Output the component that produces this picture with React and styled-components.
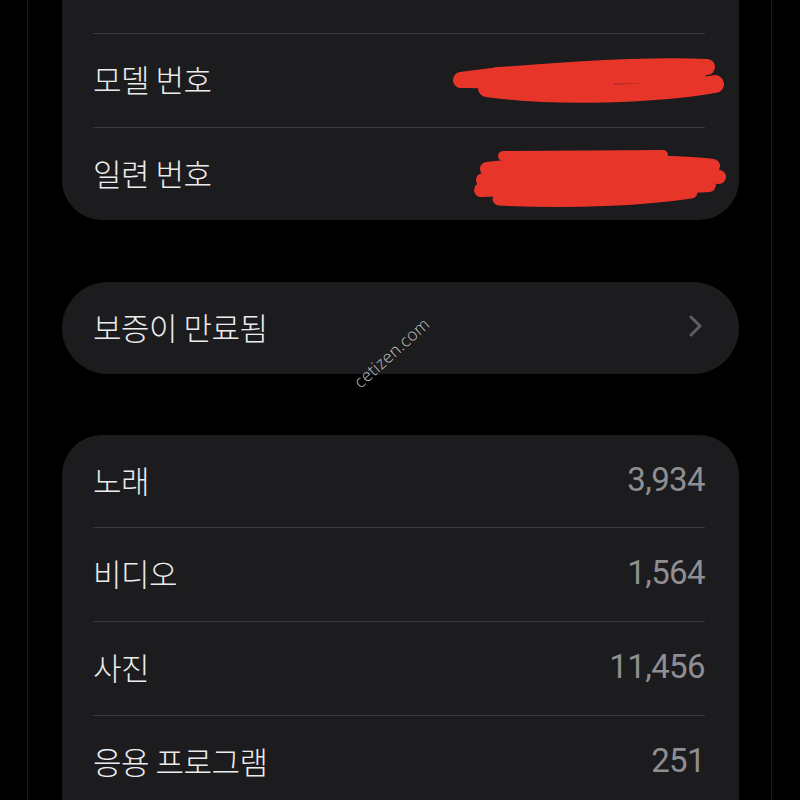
import React from 'react';
import styled, { createGlobalStyle } from 'styled-components';

const GlobalStyle = createGlobalStyle`
  html, body {
    margin: 0;
    padding: 0;
    background: #000;
  }
  body {
    font-family: "Noto Sans CJK KR", "Noto Sans", sans-serif;
    -webkit-font-smoothing: antialiased;
  }
`;

const Screen = styled.div`
  position: relative;
  width: 800px;
  height: 800px;
  overflow: hidden;
  background: #000;
`;

const Device = styled.div`
  margin: ${props => props.shift}px 28px 0 27px;
  min-height: 900px;
  border-left: 1px solid #1b1b1d;
  border-right: 1px solid #1b1b1d;
  padding: 0 32px 0 34px;
  display: flex;
  flex-direction: column;
  box-sizing: border-box;
`;

const Card = styled.div`
  background: #1c1c1e;
  border-radius: ${props => props.radius || 40}px;
  padding: 0 34px 0 31px;
  margin-bottom: ${props => props.gap || 0}px;
  display: flex;
  flex-direction: column;
`;

const Row = styled.div`
  box-sizing: border-box;
  height: ${props => props.h || 94}px;
  padding-bottom: 4px;
  display: flex;
  align-items: center;
  justify-content: space-between;
  border-top: ${props => (props.first ? 'none' : '1.5px solid #38383a')};
`;

const Label = styled.span`
  color: #ececee;
  font-size: 31px;
  font-weight: 300;
  letter-spacing: -0.5px;
  line-height: 1;
`;

const Value = styled.span`
  color: #8e8e93;
  font-family: Roboto, "Noto Sans", sans-serif;
  font-size: 33px;
  font-weight: 400;
  letter-spacing: -0.6px;
  line-height: 1;
`;

const Scribble = styled.svg`
  display: block;
  margin-right: ${props => props.pull}px;
  margin-top: ${props => props.drop || 0}px;
  overflow: visible;
`;

const Chevron = styled.svg`
  display: block;
  margin-right: 2px;
`;

const Watermark = styled.span`
  position: absolute;
  left: 344px;
  top: 341px;
  color: rgba(225, 225, 225, 0.85);
  font-family: "Open Sans", sans-serif;
  font-weight: 300;
  font-size: 17px;
  letter-spacing: 0.3px;
  transform: rotate(-42deg);
  transform-origin: center;
  pointer-events: none;
`;

const RED = '#e8352a';

const ModelScribble = () => (
  <Scribble width="266" height="46" viewBox="0 0 266 46" pull={-18} drop={4}>
    <g stroke={RED} strokeLinecap="round" fill="none">
      <path d="M4 22 C60 14, 180 6, 250 9" strokeWidth="16" />
      <path d="M30 30 C100 40, 200 36, 258 26" strokeWidth="18" />
      <path d="M40 18 L240 16" strokeWidth="18" />
      <path d="M8 23 L150 25" strokeWidth="14" />
      <path d="M200 30 L262 31" strokeWidth="5" />
    </g>
  </Scribble>
);

const SerialScribble = () => (
  <Scribble width="252" height="62" viewBox="0 0 252 62" pull={-20} drop={12}>
    <g stroke={RED} strokeLinecap="round" fill="none">
      <path d="M30 9 L190 8" strokeWidth="10" />
      <path d="M14 22 C80 15, 200 13, 240 19" strokeWidth="14" />
      <path d="M10 33 C100 28, 200 26, 246 30" strokeWidth="14" />
      <path d="M8 43 C80 40, 180 41, 236 38" strokeWidth="14" />
      <path d="M26 52 C100 56, 170 52, 218 45" strokeWidth="13" />
    </g>
  </Scribble>
);

const counts = [
  { label: '노래', value: '3,934' },
  { label: '비디오', value: '1,564' },
  { label: '사진', value: '11,456' },
  { label: '응용 프로그램', value: '251' },
];

export default function App() {
  return (
    <>
      <GlobalStyle />
      <Screen>
        <Device shift={-61}>
          <Card gap={62}>
            <Row first />
            <Row>
              <Label>모델 번호</Label>
              <ModelScribble />
            </Row>
            <Row h={93}>
              <Label>일련 번호</Label>
              <SerialScribble />
            </Row>
          </Card>

          <Card radius={46} gap={61}>
            <Row first h={92}>
              <Label>보증이 만료됨</Label>
              <Chevron width="14" height="22" viewBox="0 0 14 22">
                <path
                  d="M2 2 L11 11 L2 20"
                  stroke="#5c5c61"
                  strokeWidth="3"
                  strokeLinecap="round"
                  strokeLinejoin="round"
                  fill="none"
                />
              </Chevron>
            </Row>
          </Card>

          <Card>
            {counts.map((c, i) => (
              <Row key={c.label} first={i === 0} h={i === 0 ? 92 : 94}>
                <Label>{c.label}</Label>
                <Value>{c.value}</Value>
              </Row>
            ))}
            <Row h={60} />
          </Card>
        </Device>
        <Watermark>cetizen.com</Watermark>
      </Screen>
    </>
  );
}
